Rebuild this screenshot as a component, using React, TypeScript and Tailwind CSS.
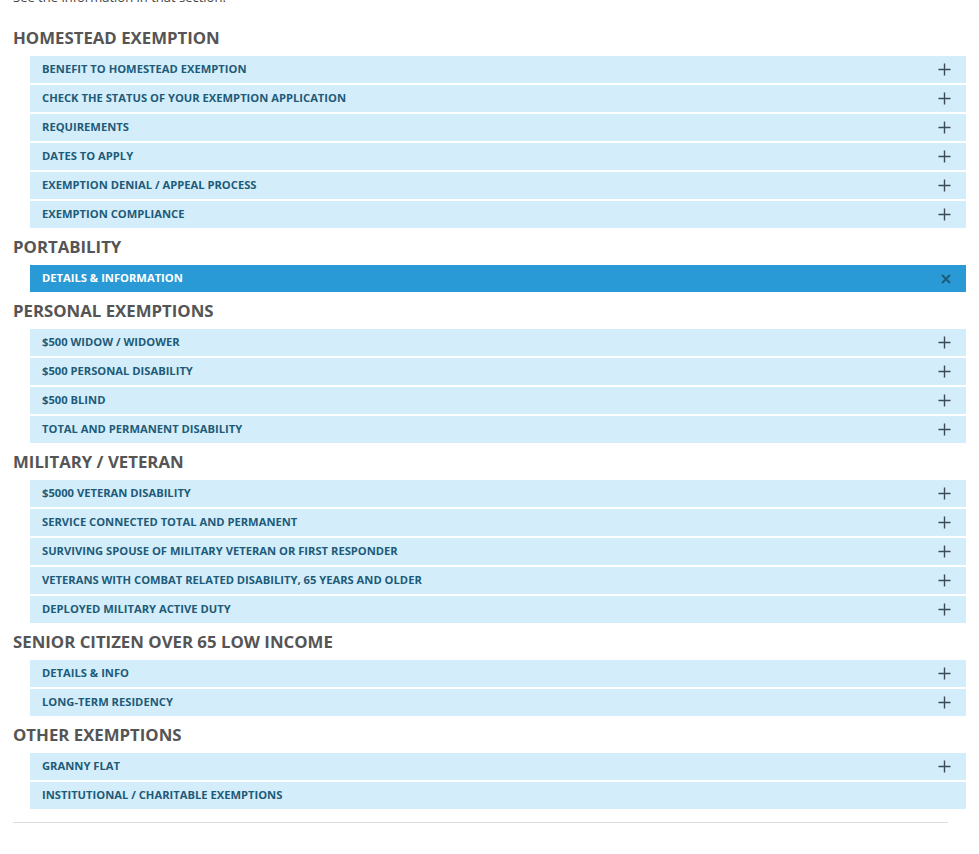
import { useState } from "react";

type Section = {
  title: string;
  items: { label: string; noIcon?: boolean }[];
};

const sections: Section[] = [
  {
    title: "HOMESTEAD EXEMPTION",
    items: [
      { label: "BENEFIT TO HOMESTEAD EXEMPTION" },
      { label: "CHECK THE STATUS OF YOUR EXEMPTION APPLICATION" },
      { label: "REQUIREMENTS" },
      { label: "DATES TO APPLY" },
      { label: "EXEMPTION DENIAL / APPEAL PROCESS" },
      { label: "EXEMPTION COMPLIANCE" },
    ],
  },
  {
    title: "PORTABILITY",
    items: [{ label: "DETAILS & INFORMATION" }],
  },
  {
    title: "PERSONAL EXEMPTIONS",
    items: [
      { label: "$500 WIDOW / WIDOWER" },
      { label: "$500 PERSONAL DISABILITY" },
      { label: "$500 BLIND" },
      { label: "TOTAL AND PERMANENT DISABILITY" },
    ],
  },
  {
    title: "MILITARY / VETERAN",
    items: [
      { label: "$5000 VETERAN DISABILITY" },
      { label: "SERVICE CONNECTED TOTAL AND PERMANENT" },
      { label: "SURVIVING SPOUSE OF MILITARY VETERAN OR FIRST RESPONDER" },
      { label: "VETERANS WITH COMBAT RELATED DISABILITY, 65 YEARS AND OLDER" },
      { label: "DEPLOYED MILITARY ACTIVE DUTY" },
    ],
  },
  {
    title: "SENIOR CITIZEN OVER 65 LOW INCOME",
    items: [{ label: "DETAILS & INFO" }, { label: "LONG-TERM RESIDENCY" }],
  },
  {
    title: "OTHER EXEMPTIONS",
    items: [
      { label: "GRANNY FLAT" },
      { label: "INSTITUTIONAL / CHARITABLE EXEMPTIONS", noIcon: true },
    ],
  },
];

function PlusIcon() {
  return (
    <svg width="13" height="13" viewBox="0 0 13 13" className="text-[#3b4a55]">
      <path d="M6.5 0.5v12M0.5 6.5h12" stroke="currentColor" strokeWidth="1.4" fill="none" />
    </svg>
  );
}

function CloseIcon() {
  return (
    <svg width="10" height="10" viewBox="0 0 10 10" className="text-[#1d5b78]">
      <path d="M1 1l8 8M9 1l-8 8" stroke="currentColor" strokeWidth="1.8" fill="none" />
    </svg>
  );
}

export default function App() {
  const [open, setOpen] = useState("PORTABILITY-DETAILS & INFORMATION");

  return (
    <div className="min-h-screen bg-white px-[13px] font-['Open_Sans',sans-serif]">
      <p className="-mt-[13px] mb-[12px] text-[13px] leading-[20px] text-[#444]">
        See the information in that section.
      </p>

      {sections.map((section) => (
        <section key={section.title}>
          <h2 className="flex h-[37px] items-center text-[16.8px] font-bold text-[#555]">
            {section.title}
          </h2>
          <div className="ml-[17px] flex flex-col gap-[2px]">
            {section.items.map((item) => {
              const id = `${section.title}-${item.label}`;
              const active = open === id;
              return (
                <button
                  key={id}
                  type="button"
                  onClick={() => setOpen(active ? "" : id)}
                  className={[
                    "flex h-[27px] w-full items-center justify-between pl-[12px] pr-[15px] text-left text-[11.2px] font-bold",
                    active ? "bg-[#2a9ad7] text-white" : "bg-[#d4edfb] text-[#1d5b78]",
                  ].join(" ")}
                >
                  <span>{item.label}</span>
                  {!item.noIcon && (active ? <CloseIcon /> : <PlusIcon />)}
                </button>
              );
            })}
          </div>
        </section>
      ))}

      <div className="mr-[18px] mt-[13px] border-t border-[#ddd]" />
    </div>
  );
}
